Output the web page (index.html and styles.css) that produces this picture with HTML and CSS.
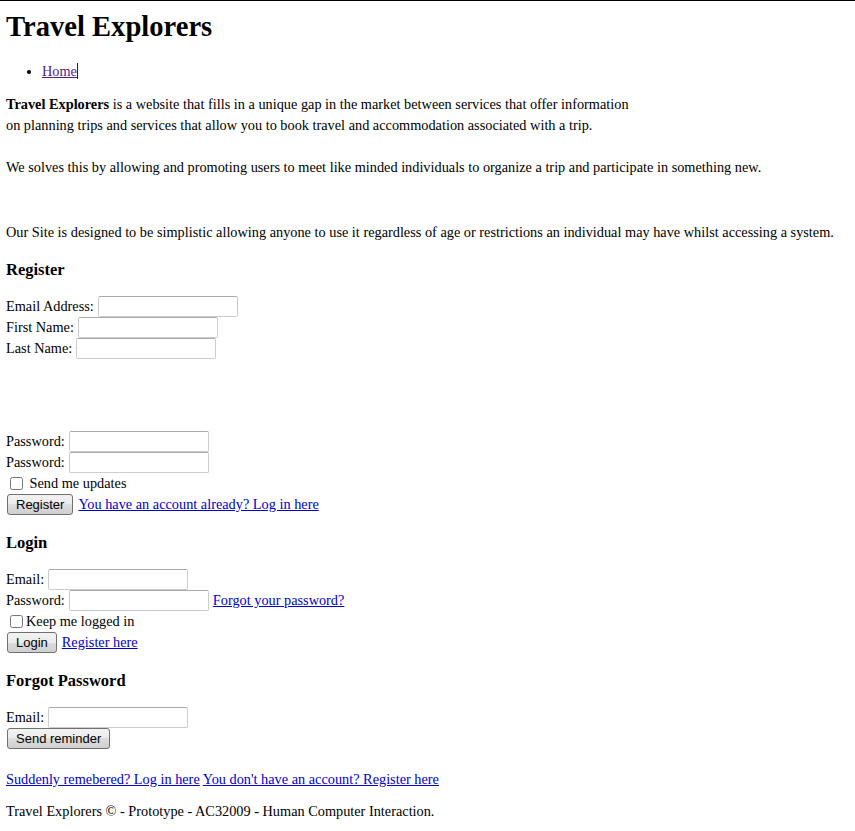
FILE: index.html
```html
<!DOCTYPE html>
<html lang="en">
<head>
<meta charset="utf-8">
<title>Travel Explorers</title>
<link rel="stylesheet" href="styles.css">
</head>
<body>
<div class="page">
  <h1 class="title">Travel Explorers</h1>
  <ul class="nav">
    <li><a class="nav-link" href="#">Home</a></li>
  </ul>
  <p class="intro intro-first"><strong>Travel Explorers</strong> is a website that fills in a unique gap in the market between services that offer information<br>on planning trips and services that allow you to book travel and accommodation associated with a trip.</p>
  <p class="intro intro-second">We solves this by allowing and promoting users to meet like minded individuals to organize a trip and participate in something new.</p>
  <p class="intro intro-third">Our Site is designed to be simplistic allowing anyone to use it regardless of age or restrictions an individual may have whilst accessing a system.</p>

  <h3 class="section-title">Register</h3>
  <form class="form">
    <div class="row"><label>Email Address:</label><input class="field" type="text"></div>
    <div class="row"><label>First Name:</label><input class="field" type="text"></div>
    <div class="row"><label>Last Name:</label><input class="field" type="text"></div>
    <div class="spacer"></div>
    <div class="row"><label>Password:</label><input class="field" type="password"></div>
    <div class="row"><label>Password:</label><input class="field" type="password"></div>
    <div class="check-row"><input class="check" type="checkbox"> Send me updates</div>
    <div class="row"><button class="btn" type="button">Register</button><a href="#">You have an account already? Log in here</a></div>
  </form>

  <h3 class="section-title section-title-after-form">Login</h3>
  <form class="form">
    <div class="row"><label>Email:</label><input class="field" type="text"></div>
    <div class="row"><label>Password:</label><input class="field" type="password"><a href="#">Forgot your password?</a></div>
    <div class="check-row"><input class="check" type="checkbox">Keep me logged in</div>
    <div class="row"><button class="btn" type="button">Login</button><a href="#">Register here</a></div>
  </form>

  <h3 class="section-title section-title-after-form">Forgot Password</h3>
  <form class="form">
    <div class="row"><label>Email:</label><input class="field" type="text"></div>
    <div class="row"><button class="btn" type="button">Send reminder</button></div>
  </form>

  <p class="links"><a href="#">Suddenly remebered? Log in here</a> <a href="#">You don't have an account? Register here</a></p>
  <p class="footer">Travel Explorers &copy; - Prototype - AC32009 - Human Computer Interaction.</p>
</div>
</body>
</html>
```

FILE: styles.css
```css
html, body {
  margin: 0;
  background: #fff;
}
body {
  font-family: "Liberation Serif", "Times New Roman", serif;
  font-size: 14.3px;
  line-height: 21px;
  color: #000;
}
.page {
  border-top: 1px solid #000;
  padding: 0 6px;
}
.title {
  font-size: 28.6px;
  line-height: 32px;
  font-weight: bold;
  margin: 10px 0 0;
}
.nav {
  margin: 18px 0 0;
  padding-left: 36px;
}
.nav-link {
  color: #551a8b;
  border-right: 1px solid #1b1b6b;
}
a {
  color: #0000cc;
}
.intro {
  margin: 0;
}
.intro-first {
  margin-top: 12px;
}
.intro-second {
  margin-top: 21px;
}
.intro-third {
  margin-top: 44px;
}
.section-title {
  font-size: 16.5px;
  line-height: 19px;
  font-weight: bold;
  margin: 17px 0 0;
}
.section-title-after-form {
  margin-top: 18px;
}
.form {
  margin: 17px 0 0;
}
.row {
  display: flex;
  align-items: center;
  gap: 4px;
  height: 21px;
}
.row label {
  white-space: nowrap;
}
.spacer {
  height: 72px;
}
.field {
  box-sizing: border-box;
  width: 140px;
  height: 21px;
  margin: 0;
  border: 1px solid #cdcdcd;
  border-top-color: #aaaaaa;
  border-radius: 2px;
  background: #fff;
  padding: 0 3px;
  font: 13px "Liberation Sans", Arial, sans-serif;
}
.check-row {
  height: 21px;
  display: flex;
  align-items: center;
  white-space: pre;
}
.check {
  width: 13px;
  height: 13px;
  margin: 3px 3px 3px 4px;
}
.btn {
  box-sizing: border-box;
  height: 21px;
  margin: 0 1px 0 1px;
  padding: 0 8px;
  border: 1px solid #707070;
  border-radius: 3px;
  background: linear-gradient(#f2f2f2, #ebebeb 50%, #dddddd 50%, #cfcfcf);
  font: 13px "Liberation Sans", Arial, sans-serif;
  color: #000;
  line-height: 19px;
}
.links {
  margin: 20px 0 0;
}
.footer {
  margin: 11px 0 0;
}
```
